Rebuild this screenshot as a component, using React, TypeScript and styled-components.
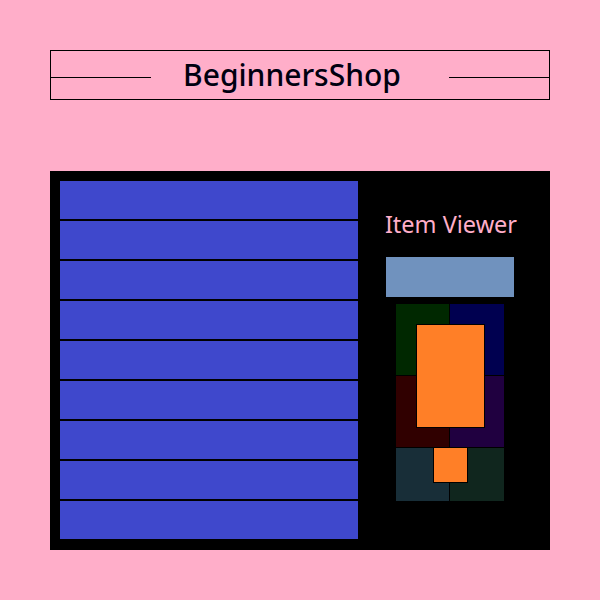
import React from 'react';
import styled, { createGlobalStyle } from 'styled-components';

const GlobalStyle = createGlobalStyle`
  html, body {
    margin: 0;
    padding: 0;
    background: #ffaec9;
  }
  body {
    font-family: 'Noto Sans', 'Open Sans', sans-serif;
  }
`;

const Page = styled.div`
  width: 600px;
  height: 600px;
  padding: 50px 50px 0;
  box-sizing: border-box;
  display: flex;
  flex-direction: column;
  gap: 71px;
`;

const Header = styled.header`
  height: 50px;
  box-sizing: border-box;
  border: 1px solid #000;
  display: flex;
  align-items: center;
`;

const Rule = styled.div`
  width: 100px;
  height: 1px;
  background: #000;
  align-self: flex-start;
  margin-top: 26px;
`;

const Title = styled.h1`
  flex: 1;
  margin: 0;
  padding-right: 16px;
  text-align: center;
  font-size: 30px;
  font-weight: 500;
  line-height: 36px;
  color: #000010;
`;

const Main = styled.main`
  height: 379px;
  box-sizing: border-box;
  background: #000;
  padding: 10px;
  display: grid;
  grid-template-columns: 298px 1fr;
`;

const List = styled.div`
  display: flex;
  flex-direction: column;
  gap: 2px;
`;

const Row = styled.div`
  height: 38px;
  background: #3f48cc;
`;

const Viewer = styled.section`
  margin-left: 4px;
  padding-top: 27px;
  display: flex;
  flex-direction: column;
  align-items: center;
`;

const ViewerTitle = styled.h2`
  margin: 0;
  font-size: 23.5px;
  font-weight: 400;
  line-height: 32px;
  color: #ffaec9;
`;

const NameBar = styled.div`
  margin-top: 17px;
  margin-right: 2px;
  width: 128px;
  height: 40px;
  background: #7092be;
`;

const Preview = styled.div`
  position: relative;
  margin-top: 7px;
  margin-right: 2px;
  width: 108px;
  display: grid;
  grid-template-columns: 53px 54px;
  grid-template-rows: 71px 71px 53px;
  gap: 1px;
  background: #000;
`;

const Cell = styled.div<{ $bg: string }>`
  background: ${p => p.$bg};
`;

const Block = styled.div<{ $x: number; $y: number; $w: number; $h: number }>`
  position: absolute;
  left: ${p => p.$x}px;
  top: ${p => p.$y}px;
  width: ${p => p.$w}px;
  height: ${p => p.$h}px;
  box-sizing: border-box;
  border: 1px solid #000;
  background: #ff7f27;
`;

const cells = ['#002800', '#000050', '#300000', '#200040', '#182e38', '#10261e'];

const App: React.FC = () => {
  return (
    <>
      <GlobalStyle />
      <Page>
        <Header>
          <Rule />
          <Title>BeginnersShop</Title>
          <Rule />
        </Header>
        <Main>
          <List>
            {Array.from({ length: 9 }).map((_, i) => (
              <Row key={i} />
            ))}
          </List>
          <Viewer>
            <ViewerTitle>Item Viewer</ViewerTitle>
            <NameBar />
            <Preview>
              {cells.map((c, i) => (
                <Cell key={i} $bg={c} />
              ))}
              <Block $x={20} $y={20} $w={69} $h={104} />
              <Block $x={37} $y={143} $w={35} $h={36} />
            </Preview>
          </Viewer>
        </Main>
      </Page>
    </>
  );
};

export default App;
